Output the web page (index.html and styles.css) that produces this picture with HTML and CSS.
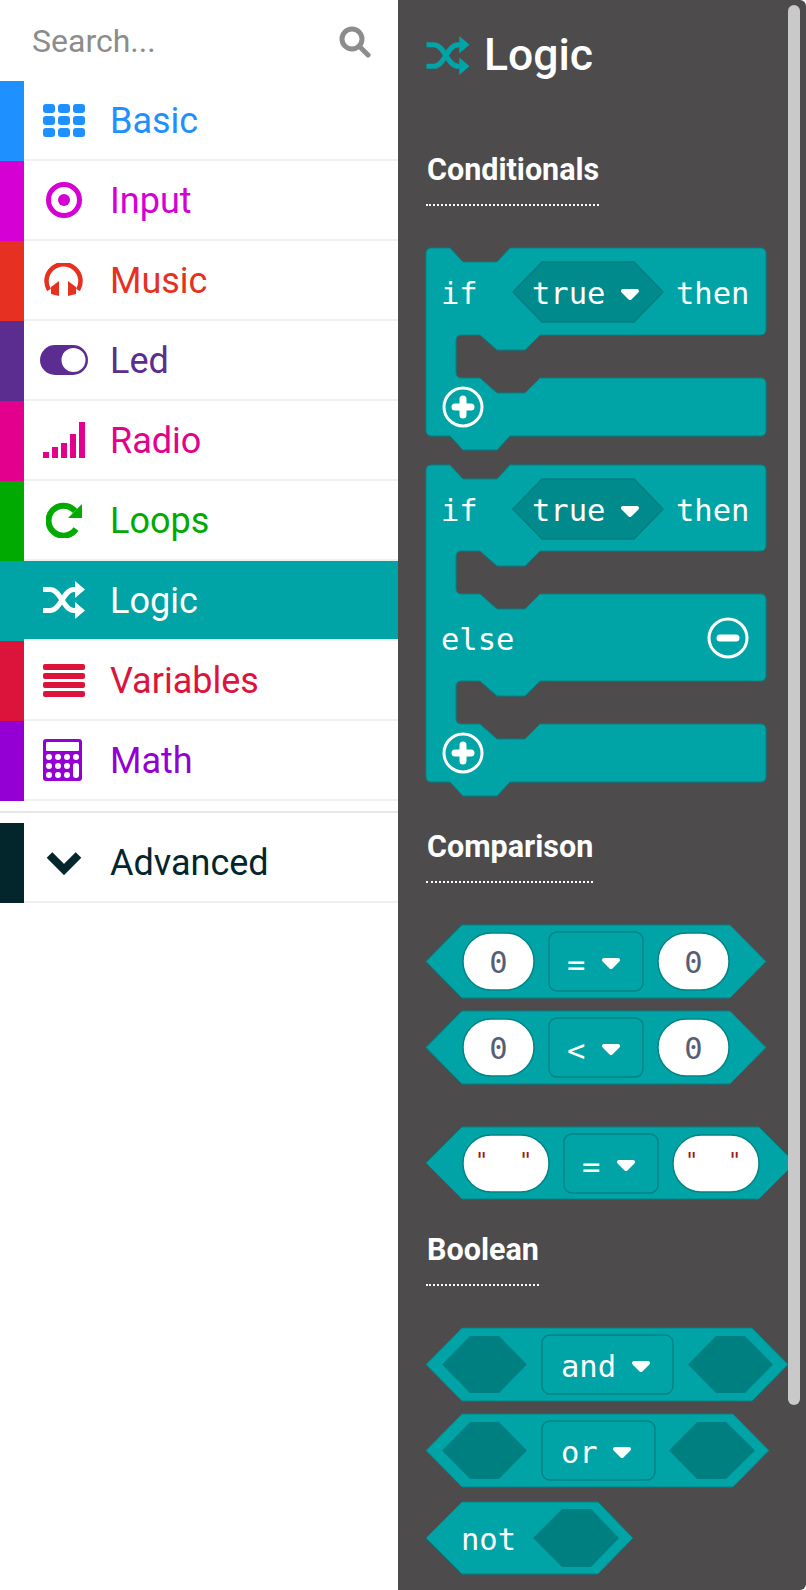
FILE: index.html
```html
<!DOCTYPE html>
<html lang="en">
<head>
  <meta charset="utf-8">
  <title>Logic toolbox</title>
  <link rel="stylesheet" href="styles.css">
</head>
<body>
  <aside class="toolbox">
    <div class="search">
      <span class="search-text">Search...</span>
      <svg class="search-icon" width="32" height="32" viewBox="0 0 32 32"><circle cx="13" cy="13" r="10" fill="none" stroke="#8c8c8c" stroke-width="5"/><path d="M21 21l8 8" stroke="#8c8c8c" stroke-width="5" stroke-linecap="round"/></svg>
    </div>

    <div class="cat cat-basic">
      <span class="strip"></span>
      <div class="cat-body">
        <span class="cat-icon">
          <svg width="42" height="33" viewBox="0 0 42 33" fill="currentColor">
            <rect x="0" y="0" width="12" height="9" rx="3"/><rect x="15" y="0" width="12" height="9" rx="3"/><rect x="30" y="0" width="12" height="9" rx="3"/>
            <rect x="0" y="12" width="12" height="9" rx="3"/><rect x="15" y="12" width="12" height="9" rx="3"/><rect x="30" y="12" width="12" height="9" rx="3"/>
            <rect x="0" y="24" width="12" height="9" rx="3"/><rect x="15" y="24" width="12" height="9" rx="3"/><rect x="30" y="24" width="12" height="9" rx="3"/>
          </svg>
        </span>
        <span class="cat-label">Basic</span>
      </div>
    </div>

    <div class="cat cat-input">
      <span class="strip"></span>
      <div class="cat-body">
        <span class="cat-icon">
          <svg width="36" height="36" viewBox="0 0 36 36"><circle cx="18" cy="18" r="15.500" fill="none" stroke="currentColor" stroke-width="5"/><circle cx="18" cy="18" r="6" fill="currentColor"/></svg>
        </span>
        <span class="cat-label">Input</span>
      </div>
    </div>

    <div class="cat cat-music">
      <span class="strip"></span>
      <div class="cat-body">
        <span class="cat-icon">
          <svg width="40" height="34" viewBox="0 0 40 34" fill="currentColor">
            <path d="M5 27A17 17 0 1 1 34 27" fill="none" stroke="currentColor" stroke-width="4.500"/>
            <path d="M7 24L15 18V33L7 31z"/>
            <path d="M32 24L24 18V33L32 31z"/>
          </svg>
        </span>
        <span class="cat-label">Music</span>
      </div>
    </div>

    <div class="cat cat-led">
      <span class="strip"></span>
      <div class="cat-body">
        <span class="cat-icon">
          <svg width="48" height="30" viewBox="0 0 48 30"><rect width="48" height="30" rx="15" fill="currentColor"/><circle cx="33.500" cy="15" r="12" fill="#fff"/></svg>
        </span>
        <span class="cat-label">Led</span>
      </div>
    </div>

    <div class="cat cat-radio">
      <span class="strip"></span>
      <div class="cat-body">
        <span class="cat-icon">
          <svg width="42" height="36" viewBox="0 0 42 36" fill="currentColor">
            <rect x="0" y="30" width="6" height="6"/><rect x="9" y="25" width="6" height="11"/><rect x="18" y="21" width="6" height="15"/><rect x="27" y="12" width="6" height="24"/><rect x="36" y="0" width="6" height="36"/>
          </svg>
        </span>
        <span class="cat-label">Radio</span>
      </div>
    </div>

    <div class="cat cat-loops">
      <span class="strip"></span>
      <div class="cat-body">
        <span class="cat-icon">
          <svg width="36" height="36" viewBox="0 0 36 36">
            <path d="M29 9A15 15 0 1 0 30 27" fill="none" stroke="currentColor" stroke-width="6"/>
            <path d="M36 2v14H22z" fill="currentColor"/>
          </svg>
        </span>
        <span class="cat-label">Loops</span>
      </div>
    </div>

    <div class="cat cat-logic">
      <span class="strip"></span>
      <div class="cat-body">
        <span class="cat-icon">
          <svg width="42" height="38" viewBox="0 0 42 38">
            <path d="M0 8.500H7C18 8.500 20 29.500 31 29.500H35M0 29.500H7C18 29.500 20 8.500 31 8.500H35" fill="none" stroke="currentColor" stroke-width="5"/>
            <path d="M32 0l10 8.500-10 8.500zM32 21l10 8.500-10 8.500z" fill="currentColor"/>
          </svg>
        </span>
        <span class="cat-label">Logic</span>
      </div>
    </div>

    <div class="cat cat-variables">
      <span class="strip"></span>
      <div class="cat-body">
        <span class="cat-icon">
          <svg width="42" height="33" viewBox="0 0 42 33" fill="currentColor">
            <rect y="0" width="42" height="6" rx="2"/><rect y="9" width="42" height="6" rx="2"/><rect y="18" width="42" height="6" rx="2"/><rect y="27" width="42" height="6" rx="2"/>
          </svg>
        </span>
        <span class="cat-label">Variables</span>
      </div>
    </div>

    <div class="cat cat-math">
      <span class="strip"></span>
      <div class="cat-body">
        <span class="cat-icon">
          <svg width="39" height="42" viewBox="0 0 39 42">
            <rect width="39" height="42" rx="3" fill="currentColor"/>
            <rect x="3" y="3" width="33" height="9" rx="1" fill="#fff"/>
            <g fill="#fff">
              <circle cx="6" cy="18" r="3"/><circle cx="15" cy="18" r="3"/><circle cx="24" cy="18" r="3"/><circle cx="33" cy="18" r="3"/>
              <circle cx="6" cy="27" r="3"/><circle cx="15" cy="27" r="3"/><circle cx="24" cy="27" r="3"/>
              <circle cx="6" cy="36" r="3"/><circle cx="15" cy="36" r="3"/><circle cx="24" cy="36" r="3"/>
              <rect x="30" y="24" width="6" height="15" rx="3"/>
            </g>
          </svg>
        </span>
        <span class="cat-label">Math</span>
      </div>
    </div>

    <hr class="sep">

    <div class="cat cat-advanced">
      <span class="strip"></span>
      <div class="cat-body">
        <span class="cat-icon">
          <svg width="38" height="25" viewBox="0 0 38 25"><path d="M4.500 5L19 19.500 33.500 5" fill="none" stroke="currentColor" stroke-width="8"/></svg>
        </span>
        <span class="cat-label">Advanced</span>
      </div>
    </div>
  </aside>

  <main class="flyout">
    <div class="scroll-thumb"></div>

    <div class="fly-title">
      <svg width="44" height="39" viewBox="0 0 42 38">
        <path d="M0 8.500H7C18 8.500 20 29.500 31 29.500H35M0 29.500H7C18 29.500 20 8.500 31 8.500H35" fill="none" stroke="#00a4a6" stroke-width="5"/>
        <path d="M32 0l10 8.500-10 8.500zM32 21l10 8.500-10 8.500z" fill="#00a4a6"/>
      </svg>
      <span>Logic</span>
    </div>

    <h3 class="fly-head">Conditionals</h3>

    <svg class="block b-if" width="340" height="203" viewBox="0 0 340 203">
      <path class="blk" d="M0 5a5 5 0 0 1 5-5H24L37 14H71L84 0H335a5 5 0 0 1 5 5V82a5 5 0 0 1-5 5H114L99 102H71L54 87H35a5 5 0 0 0-5 5V125a5 5 0 0 0 5 5H54L71 145H99L114 130H335a5 5 0 0 1 5 5V183a5 5 0 0 1-5 5H84L71 202H37L24 188H5a5 5 0 0 1-5-5z"/>
      <text class="lbl" x="15" y="56">if</text>
      <path class="field" d="M87 44L116 14H208L237 44 208 74H116z"/>
      <text class="lbl" x="106" y="56">true</text>
      <path class="caret" d="M197 43H211L204 50z"/>
      <text class="lbl" x="250" y="56">then</text>
      <circle class="ring" cx="37" cy="159" r="19"/>
      <path class="mark" d="M37 151V167M29 159H45"/>
    </svg>

    <svg class="block b-ifelse" width="340" height="317" viewBox="0 0 340 317">
      <path class="blk" d="M0 5a5 5 0 0 1 5-5H24L37 14H71L84 0H335a5 5 0 0 1 5 5V81a5 5 0 0 1-5 5H114L99 101H71L54 86H35a5 5 0 0 0-5 5V124a5 5 0 0 0 5 5H54L71 144H99L114 129H335a5 5 0 0 1 5 5V211a5 5 0 0 1-5 5H114L99 231H71L54 216H35a5 5 0 0 0-5 5V254a5 5 0 0 0 5 5H54L71 274H99L114 259H335a5 5 0 0 1 5 5V312a5 5 0 0 1-5 5H84L71 331H37L24 317H5a5 5 0 0 1-5-5z"/>
      <text class="lbl" x="15" y="56">if</text>
      <path class="field" d="M87 44L116 14H208L237 44 208 74H116z"/>
      <text class="lbl" x="106" y="56">true</text>
      <path class="caret" d="M197 43H211L204 50z"/>
      <text class="lbl" x="250" y="56">then</text>
      <text class="lbl" x="15" y="185">else</text>
      <circle class="ring" cx="302" cy="173" r="19"/>
      <path class="mark" d="M294 173H310"/>
      <circle class="ring" cx="37" cy="288" r="19"/>
      <path class="mark" d="M37 280V296M29 288H45"/>
    </svg>

    <h3 class="fly-head head-comparison">Comparison</h3>

    <svg class="block" width="340" height="73" viewBox="0 0 340 73">
      <path class="blk hex" d="M0 36.500L36 0H304L340 36.500 304 73H36z"/>
      <rect class="pill" x="37" y="8" width="71" height="57" rx="28"/>
      <text class="num" x="72.500" y="48">0</text>
      <rect class="drop" x="123" y="7" width="94" height="59" rx="8"/>
      <text class="lbl" x="141" y="50">=</text>
      <path class="caret" d="M178 35H192L185 42z"/>
      <rect class="pill" x="232" y="8" width="71" height="57" rx="28"/>
      <text class="num" x="267.500" y="48">0</text>
    </svg>

    <svg class="block b-next" width="340" height="73" viewBox="0 0 340 73">
      <path class="blk hex" d="M0 36.500L36 0H304L340 36.500 304 73H36z"/>
      <rect class="pill" x="37" y="8" width="71" height="57" rx="28"/>
      <text class="num" x="72.500" y="48">0</text>
      <rect class="drop" x="123" y="7" width="94" height="59" rx="8"/>
      <text class="lbl" x="141" y="50">&lt;</text>
      <path class="caret" d="M178 35H192L185 42z"/>
      <rect class="pill" x="232" y="8" width="71" height="57" rx="28"/>
      <text class="num" x="267.500" y="48">0</text>
    </svg>

    <svg class="block b-string" width="370" height="73" viewBox="0 0 370 73">
      <path class="blk hex" d="M0 36L36 0H333L369 36 333 72H36z"/>
      <rect class="pill" x="37" y="8" width="86" height="57" rx="28"/>
      <text class="quote" x="55.500" y="41">"</text>
      <text class="quote" x="99.500" y="41">"</text>
      <rect class="drop" x="138" y="7" width="94" height="59" rx="8"/>
      <text class="lbl" x="156" y="50">=</text>
      <path class="caret" d="M193 35H207L200 42z"/>
      <rect class="pill" x="247" y="8" width="86" height="57" rx="28"/>
      <text class="quote" x="265.500" y="41">"</text>
      <text class="quote" x="308.500" y="41">"</text>
    </svg>

    <h3 class="fly-head head-boolean">Boolean</h3>

    <svg class="block" width="363" height="73" viewBox="0 0 363 73">
      <path class="blk hex" d="M0 36.500L36 0H326L362 36.500 326 73H36z"/>
      <path class="hole" d="M16 36.500L44 8H73L101 36.500 73 65H44z"/>
      <rect class="drop" x="116" y="7" width="131" height="59" rx="8"/>
      <text class="lbl" x="135" y="49">and</text>
      <path class="caret" d="M208 35H222L215 42z"/>
      <path class="hole" d="M262 36.500L290 8H319L347 36.500 319 65H290z"/>
    </svg>

    <svg class="block b-next" width="344" height="73" viewBox="0 0 344 73">
      <path class="blk hex" d="M0 36.500L36 0H307L343 36.500 307 73H36z"/>
      <path class="hole" d="M16 36.500L44 8H73L101 36.500 73 65H44z"/>
      <rect class="drop" x="116" y="7" width="113" height="59" rx="8"/>
      <text class="lbl" x="135" y="49">or</text>
      <path class="caret" d="M189 35H203L196 42z"/>
      <path class="hole" d="M243 36.500L271 8H300L329 36.500 300 65H271z"/>
    </svg>

    <svg class="block b-not" width="208" height="73" viewBox="0 0 208 73">
      <path class="blk hex" d="M0 36L36 0H172L207 36 172 72H36z"/>
      <text class="lbl" x="35" y="48">not</text>
      <path class="hole" d="M107 36L136 7H165L193 36 165 65H136z"/>
    </svg>
  </main>
</body>
</html>
```

FILE: styles.css
```css
* {
  box-sizing: border-box;
}

html, body {
  height: 100%;
}

body {
  display: flex;
  height: 1590px;
  margin: 0;
  overflow: hidden;
  background: #fff;
  font-family: Roboto, sans-serif;
}

/* left toolbox */
.toolbox {
  width: 398px;
  flex: none;
}

.search {
  display: flex;
  align-items: center;
  justify-content: space-between;
  height: 81px;
  padding: 0 27px 0 32px;
}

.search-text {
  color: #8c8c8c;
  font-size: 32px;
}

.search-icon {
  margin-top: 2px;
}

.cat {
  display: flex;
  height: 80px;
}

.strip {
  width: 24px;
  flex: none;
  background: currentColor;
}

.cat-body {
  display: flex;
  flex: 1;
  align-items: center;
  border-bottom: 2px solid #edeff0;
}

.cat-icon {
  display: flex;
  align-items: center;
  justify-content: center;
  width: 80px;
  flex: none;
}

.cat-label {
  margin-left: 6px;
  padding-top: 2px;
  font-size: 36px;
}

.cat-basic { color: #1e90ff; }
.cat-input { color: #d400d4; }
.cat-music { color: #e63022; }
.cat-led { color: #5c2d91; }
.cat-radio { color: #e3008c; }
.cat-loops { color: #00aa00; }
.cat-logic { color: #fff; }
.cat-variables { color: #dc143c; }
.cat-math { color: #9400d3; }
.cat-advanced { color: #03262c; }

.cat-logic .strip,
.cat-logic .cat-body {
  background: #00a4a6;
}

.cat-math svg {
  margin-left: -3px;
}

.sep {
  height: 2px;
  margin: 10px 0;
  border: 0;
  background: #e5e7e8;
}

/* flyout with the blocks */
.flyout {
  position: relative;
  flex: 1;
  padding: 0 0 0 28px;
  overflow: hidden;
  border-radius: 0 6px 6px 0;
  background: #4d4b4c;
}

.scroll-thumb {
  position: absolute;
  top: 5px;
  left: 390px;
  z-index: 2;
  width: 12px;
  height: 1400px;
  border-radius: 6px;
  background: #c9c9c9;
}

.fly-title {
  display: flex;
  align-items: center;
  gap: 14px;
  height: 152px;
  padding-bottom: 42px;
  color: #fff;
  font-size: 44.500px;
  font-weight: 500;
}

.fly-head {
  width: fit-content;
  height: 54px;
  margin: 0 0 42px;
  padding-left: 1px;
  border-bottom: 2px dotted #fff;
  color: #fff;
  font-size: 30.500px;
  font-weight: 700;
  line-height: 36px;
}

.head-comparison {
  margin-top: 47px;
}

.head-boolean {
  margin-top: 32px;
}

.block {
  display: block;
  overflow: visible;
}

.b-if {
  margin-bottom: 14px;
}

.b-next {
  margin-top: 13px;
}

.b-string {
  margin-top: 43px;
}

.b-not {
  margin-top: 15px;
}

.blk {
  fill: #00a4a6;
  stroke: #008385;
  stroke-width: 1;
  stroke-linejoin: round;
}

.field {
  fill: #008a8c;
  stroke: #007e80;
  stroke-width: 1.500;
}

.hole {
  fill: #007f80;
}

.pill {
  fill: #fff;
  stroke: #008385;
  stroke-width: 1.500;
}

.drop {
  fill: #00a4a6;
  stroke: #008385;
  stroke-width: 1.500;
}

.lbl,
.num,
.quote {
  font-family: "DejaVu Sans Mono", monospace;
  font-size: 30.500px;
}

.lbl {
  fill: #fff;
}

.num {
  fill: #575e75;
  text-anchor: middle;
}

.quote {
  fill: #a31515;
  font-size: 22px;
  text-anchor: middle;
}

.caret {
  fill: #fff;
  stroke: #fff;
  stroke-width: 4;
  stroke-linejoin: round;
}

.ring {
  fill: none;
  stroke: #fff;
  stroke-width: 3;
}

.mark {
  fill: none;
  stroke: #fff;
  stroke-width: 7;
  stroke-linecap: round;
}
```
